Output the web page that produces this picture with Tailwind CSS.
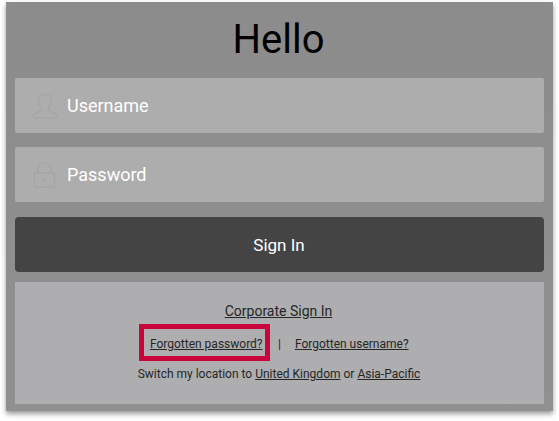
<!DOCTYPE html>
<html lang="en">
<head>
<meta charset="utf-8">
<script src="https://cdn.jsdelivr.net/npm/@tailwindcss/browser@4"></script>
</head>
<body class="bg-white font-['Roboto',sans-serif] overflow-hidden">
<div class="w-[559px] h-[421px] pt-[2px] pl-[6px]">
  <main class="w-[547px] h-[409px] bg-gradient-to-b from-[#8c8c8c] to-[#909090] px-[9px] shadow-[0_3px_5px_rgba(0,0,0,0.4)] flex flex-col">
    <h1 class="h-[76px] flex items-center justify-center text-[40px] leading-none text-black pb-[1px] pr-[2px]">Hello</h1>
    <div class="h-[55px] bg-[#adadad] rounded-[2px] flex items-center">
      <svg class="ml-[17px] w-[26px] h-[26px] text-[#a4a4a4]" viewBox="0 0 26 26" fill="none" stroke="currentColor" stroke-width="1.200"><path d="M13 1c-4 0-6.500 3-6.500 7 0 3 1.300 5.500 3.300 7v2.500c0 1-6.800 2-8.300 4.500-.6 1-.5 3 .5 3h22c1 0 1.100-2 .5-3-1.500-2.500-8.300-3.500-8.300-4.500V15c2-1.500 3.300-4 3.300-7 0-4-2.500-7-6.500-7z"/></svg>
      <span class="ml-[9px] text-[18px] font-[450] text-white">Username</span>
    </div>
    <div class="mt-[14px] h-[55px] bg-[#adadad] rounded-[2px] flex items-center">
      <svg class="ml-[18px] w-[24px] h-[26px] text-[#a4a4a4]" viewBox="0 0 24 26" fill="none" stroke="currentColor" stroke-width="1.200"><rect x="1.500" y="11" width="20" height="14"/><path d="M5 11V7.500C5 3.500 7.800 1 11.500 1S18 3.500 18 7.500V11"/><path d="M11.500 16v4" stroke-width="2"/></svg>
      <span class="ml-[10px] text-[18px] font-[450] text-white">Password</span>
    </div>
    <button class="mt-[15px] h-[55px] bg-[#444444] rounded-[4px] text-white text-[17px] font-[450] pt-[2px] pr-[1px]">Sign In</button>
    <section class="mt-[10px] h-[122px] bg-[#aeaeb0] flex flex-col items-center text-[#262626]">
      <a class="mt-[21px] mr-[2px] text-[14px] leading-[16px] underline">Corporate Sign In</a>
      <div class="mt-[5px] mr-[11px] flex items-center text-[12px] leading-[14px]">
        <a class="block border-[5px] border-[#c8063c] pl-[5.500px] pr-[3px] w-[131px] h-[37px] leading-[30px] underline whitespace-nowrap">Forgotten password?</a>
        <span class="w-[18px] text-center pt-[3px]">|</span>
        <a class="ml-[6.500px] underline pt-[3px]">Forgotten username?</a>
      </div>
      <p class="mt-[6px] mr-[1px] text-[12px] leading-[14px]">Switch my location to <a class="underline">United Kingdom</a> or <a class="underline">Asia-Pacific</a></p>
    </section>
  </main>
</div>
</body>
</html>
